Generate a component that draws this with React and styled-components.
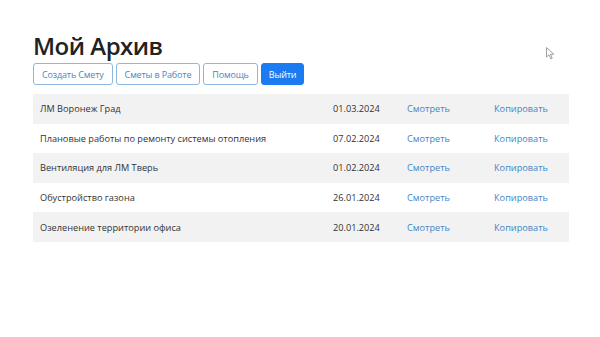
import React from "react";
import styled, { createGlobalStyle } from "styled-components";

const Global = createGlobalStyle`
  html, body { margin: 0; padding: 0; background: #fff; }
  body { font-family: "Open Sans", "Noto Sans", sans-serif; color: #333; }
`;

const Page = styled.div`
  position: relative;
  width: 600px;
  height: 337px;
  padding: 30px 31px 0 33px;
  box-sizing: border-box;
`;

const Title = styled.h1`
  margin: 0;
  font-size: 24px;
  font-weight: 600;
  line-height: 32px;
  color: #222;
  letter-spacing: -0.5px;
`;

const Toolbar = styled.div`
  display: flex;
  gap: 3px;
  margin-top: 1px;
`;

const Button = styled.button`
  font-family: inherit;
  font-size: 9px;
  letter-spacing: -0.15px;
  height: 22px;
  padding: 0 ${(p) => (p.$primary ? "7px" : "8px")};
  border-radius: 3px;
  border: 1px solid ${(p) => (p.$primary ? "#1a7cf0" : "#8fb8de")};
  background: ${(p) => (p.$primary ? "#1a7cf0" : "#fff")};
  color: ${(p) => (p.$primary ? "#fff" : "#4a86c0")};
  cursor: pointer;
`;

const Table = styled.div`
  margin-top: 9px;
  width: 536px;
`;

const Row = styled.div`
  display: grid;
  grid-template-columns: 293px 74px 87px 1fr;
  align-items: center;
  height: 29.6px;
  padding-left: 7px;
  background: ${(p) => (p.$striped ? "#f2f2f2" : "#fff")};
  font-size: 9.2px;
  color: #333;
`;

const Link = styled.a`
  color: #3f86c8;
  text-decoration: none;
`;

const Cursor = styled.svg`
  position: absolute;
  left: 546px;
  top: 47px;
`;

const rows = [
  ["ЛМ Воронеж Град", "01.03.2024"],
  ["Плановые работы по ремонту системы отопления", "07.02.2024"],
  ["Вентиляция для ЛМ Тверь", "01.02.2024"],
  ["Обустройство газона", "26.01.2024"],
  ["Озеленение территории офиса", "20.01.2024"],
];

export default function App() {
  return (
    <Page>
      <Global />
      <Title>Мой Архив</Title>
      <Toolbar>
        <Button>Создать Смету</Button>
        <Button>Сметы в Работе</Button>
        <Button>Помощь</Button>
        <Button $primary>Выйти</Button>
      </Toolbar>
      <Table>
        {rows.map(([name, date], i) => (
          <Row key={i} $striped={i % 2 === 0}>
            <span>{name}</span>
            <span>{date}</span>
            <Link href="#">Смотреть</Link>
            <Link href="#">Копировать</Link>
          </Row>
        ))}
      </Table>
      <Cursor width="9" height="13" viewBox="0 0 9 13">
        <path d="M0.5 0.5 L0.5 10 L3 7.8 L4.8 11.8 L6.2 11.2 L4.5 7.3 L7.8 7.3 Z" fill="#fff" stroke="#888" strokeWidth="0.8" />
      </Cursor>
    </Page>
  );
}
